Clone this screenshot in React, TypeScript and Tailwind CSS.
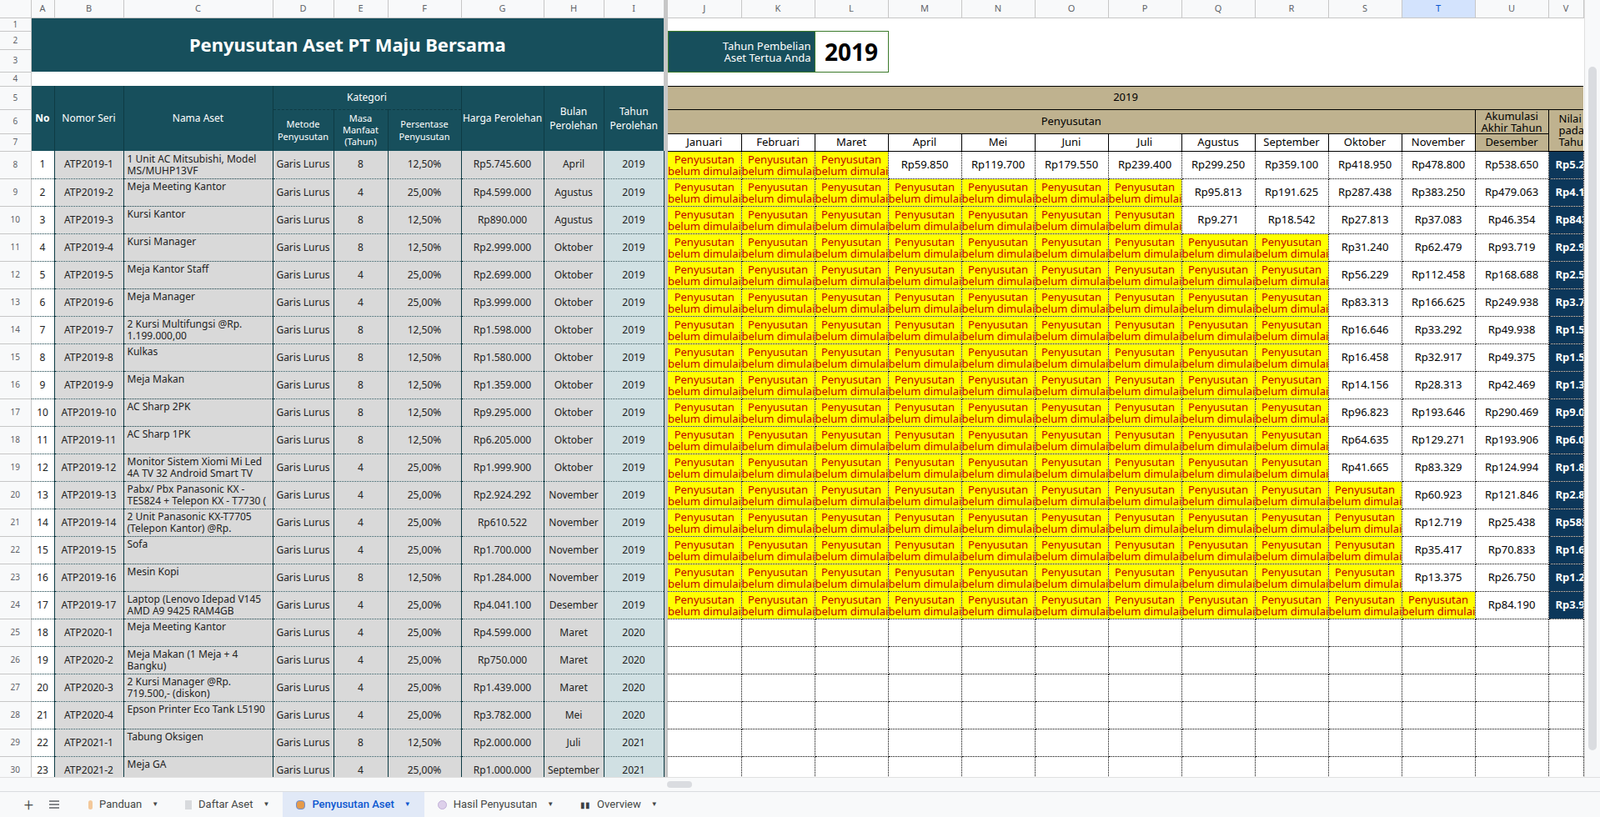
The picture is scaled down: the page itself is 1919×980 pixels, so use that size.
import React from 'react';

const months = ['Januari', 'Februari', 'Maret', 'April', 'Mei', 'Juni', 'Juli', 'Agustus', 'September', 'Oktober', 'November'];
const letters = ['A', 'B', 'C', 'D', 'E', 'F', 'G', 'H', 'I'];
const rightLetters = ['J', 'K', 'L', 'M', 'N', 'O', 'P', 'Q', 'R', 'S', 'T', 'U', 'V'];
const leftW = [28, 83, 179, 73, 65, 88, 99, 72, 72];

type Row = { seri: string; nama: string; masa: number; harga: number; bulan: string; tahun: number; start: number; dep: number[] };

const R = (seri: string, nama: string, masa: number, harga: number, bulan: string, tahun: number, start: number, dep: number[]): Row => ({ seri, nama, masa, harga, bulan, tahun, start, dep });

const rows: Row[] = [
  R('ATP2019-1', '1 Unit AC Mitsubishi, Model MS/MUHP13VF', 8, 5745600, 'April', 2019, 3, [59850, 119700, 179550, 239400, 299250, 359100, 418950, 478800, 538650]),
  R('ATP2019-2', 'Meja Meeting Kantor', 4, 4599000, 'Agustus', 2019, 7, [95813, 191625, 287438, 383250, 479063]),
  R('ATP2019-3', 'Kursi Kantor', 8, 890000, 'Agustus', 2019, 7, [9271, 18542, 27813, 37083, 46354]),
  R('ATP2019-4', 'Kursi Manager', 8, 2999000, 'Oktober', 2019, 9, [31240, 62479, 93719]),
  R('ATP2019-5', 'Meja Kantor Staff', 4, 2699000, 'Oktober', 2019, 9, [56229, 112458, 168688]),
  R('ATP2019-6', 'Meja Manager', 4, 3999000, 'Oktober', 2019, 9, [83313, 166625, 249938]),
  R('ATP2019-7', '2 Kursi Multifungsi @Rp. 1.199.000,00', 8, 1598000, 'Oktober', 2019, 9, [16646, 33292, 49938]),
  R('ATP2019-8', 'Kulkas', 8, 1580000, 'Oktober', 2019, 9, [16458, 32917, 49375]),
  R('ATP2019-9', 'Meja Makan', 8, 1359000, 'Oktober', 2019, 9, [14156, 28313, 42469]),
  R('ATP2019-10', 'AC Sharp 2PK', 8, 9295000, 'Oktober', 2019, 9, [96823, 193646, 290469]),
  R('ATP2019-11', 'AC Sharp 1PK', 8, 6205000, 'Oktober', 2019, 9, [64635, 129271, 193906]),
  R('ATP2019-12', 'Monitor Sistem Xiomi Mi Led 4A TV 32 Android Smart TV', 4, 1999900, 'Oktober', 2019, 9, [41665, 83329, 124994]),
  R('ATP2019-13', 'Pabx/ Pbx Panasonic KX - TES824 + Telepon KX - T7730 ( Telepon )', 4, 2924292, 'November', 2019, 10, [60923, 121846]),
  R('ATP2019-14', '2 Unit Panasonic KX-T7705 (Telepon Kantor) @Rp. 305.261,-', 4, 610522, 'November', 2019, 10, [12719, 25438]),
  R('ATP2019-15', 'Sofa', 4, 1700000, 'November', 2019, 10, [35417, 70833]),
  R('ATP2019-16', 'Mesin Kopi', 8, 1284000, 'November', 2019, 10, [13375, 26750]),
  R('ATP2019-17', 'Laptop (Lenovo Idepad V145 AMD A9 9425 RAM4GB HDDITB 15.6" Radeon Graphics)', 4, 4041100, 'Desember', 2019, 11, [84190]),
  R('ATP2020-1', 'Meja Meeting Kantor', 4, 4599000, 'Maret', 2020, -1, []),
  R('ATP2020-2', 'Meja Makan (1 Meja + 4 Bangku)', 4, 750000, 'Maret', 2020, -1, []),
  R('ATP2020-3', '2 Kursi Manager @Rp. 719.500,- (diskon)', 4, 1439000, 'Maret', 2020, -1, []),
  R('ATP2020-4', 'Epson Printer Eco Tank L5190', 4, 3782000, 'Mei', 2020, -1, []),
  R('ATP2021-1', 'Tabung Oksigen', 8, 2000000, 'Juli', 2021, -1, []),
  R('ATP2021-2', 'Meja GA', 4, 1000000, 'September', 2021, -1, []),
];

const rp = (n: number) => 'Rp' + n.toLocaleString('de-DE');

const sans = "[font-family:'Liberation_Sans',Arial,sans-serif]";
const serif = "[font-family:'Liberation_Serif',serif]";
const rowHdr = `w-[37px] border-r border-b border-[#c7c7c7] bg-[#f8f9fa] text-[10px] text-[#5f6368] text-center ${sans}`;
const L = 'border-r border-[#0e3b44] [border-bottom:1px_dotted_#0e3b44] text-[12px] text-center text-[#222] whitespace-nowrap overflow-hidden';
const Rc = `border-r border-b border-dotted border-black text-[13px] text-center whitespace-nowrap overflow-hidden ${serif}`;
const head = 'bg-[#174f5c] text-white text-center border-r border-[#0e3b44]';

export default function App() {
  return (
    <div className="w-[1919px] h-[980px] overflow-hidden bg-white flex flex-col [font-family:'DejaVu_Serif',serif]">
      <div className="flex h-[938px] overflow-hidden">
        <table className="table-fixed border-collapse w-[1899px] shrink-0">
          <colgroup>
            <col className="w-[37px]" />
            {leftW.map((w, i) => <col key={i} style={{ width: w }} />)}
            <col className="w-[5px]" />
            {Array.from({ length: 12 }).map((_, i) => <col key={'r' + i} className="w-[88px]" />)}
            <col className="w-[42px]" />
          </colgroup>
          <tbody>
            <tr className={`h-[21px] text-[11px] text-[#5f6368] ${sans}`}>
              <td className="bg-[#f8f9fa] border-r border-b border-[#c7c7c7]" />
              {letters.map((l) => <td key={l} className="bg-[#f8f9fa] border-r border-b border-[#c7c7c7] text-center">{l}</td>)}
              <td className="bg-[#c7c7c7]" />
              {rightLetters.map((l) => <td key={l} className={`${l === 'T' ? 'bg-[#d3e3fd] text-[#0b57d0]' : 'bg-[#f8f9fa]'} border-r border-b border-[#c7c7c7] text-center`}>{l}</td>)}
            </tr>
            <tr className="h-[16px]">
              <td className={rowHdr}>1</td>
              <td colSpan={9} rowSpan={3} className="bg-[#174f5c] text-white text-center font-bold text-[22px]">Penyusutan Aset PT Maju Bersama</td>
              <td rowSpan={4} className="bg-[#c7c7c7]" />
              <td colSpan={13} />
            </tr>
            <tr className="h-[22px]">
              <td className={rowHdr}>2</td>
              <td colSpan={2} rowSpan={2} className={`bg-[#174f5c] text-white text-right pr-1 text-[13px] leading-[14px] border border-[#3b7a2a] ${serif}`}>Tahun Pembelian<br />Aset Tertua Anda</td>
              <td rowSpan={2} className={`border border-[#3b7a2a] text-center font-bold text-[28px] ${serif}`}>2019</td>
              <td colSpan={10} />
            </tr>
            <tr className="h-[27px]">
              <td className={rowHdr}>3</td>
              <td colSpan={10} />
            </tr>
            <tr className="h-[17px]">
              <td className={rowHdr}>4</td>
              <td colSpan={9} />
              <td colSpan={13} />
            </tr>
            <tr className="h-[28px]">
              <td className={rowHdr}>5</td>
              <td rowSpan={3} className={`${head} text-[12px] font-bold`}>No</td>
              <td rowSpan={3} className={`${head} text-[12px]`}>Nomor Seri</td>
              <td rowSpan={3} className={`${head} text-[12px]`}>Nama Aset</td>
              <td colSpan={3} className={`${head} text-[12px] [border-bottom:1px_dashed_#0e3b44]`}>Kategori</td>
              <td rowSpan={3} className={`${head} text-[12px]`}>Harga Perolehan</td>
              <td rowSpan={3} className={`${head} text-[12px] leading-[17px]`}>Bulan<br />Perolehan</td>
              <td rowSpan={3} className="bg-[#174f5c] text-white text-[12px] leading-[17px] text-center">Tahun<br />Perolehan</td>
              <td rowSpan={3} className="bg-[#c7c7c7]" />
              <td colSpan={13} className={`bg-[#bfb28f] border-t border-b border-black text-center text-[13px] ${serif}`}>2019</td>
            </tr>
            <tr className="h-[27px]">
              <td className={rowHdr}>6</td>
              <td rowSpan={2} className={`${head} text-[11px] leading-[15px]`}>Metode<br />Penyusutan</td>
              <td rowSpan={2} className={`${head} text-[11px] leading-[14px]`}>Masa<br />Manfaat<br />(Tahun)</td>
              <td rowSpan={2} className={`${head} text-[11px] leading-[15px]`}>Persentase<br />Penyusutan</td>
              <td colSpan={11} className={`bg-[#bfb28f] border-b border-black text-center text-[13px] ${serif}`}>Penyusutan</td>
              <td className={`bg-[#bfb28f] border-l border-b border-black text-center text-[13px] leading-[14px] ${serif}`}>Akumulasi<br />Akhir Tahun</td>
              <td rowSpan={2} className={`bg-[#bfb28f] text-[13px] leading-[14px] border-l border-b border-black whitespace-nowrap overflow-hidden pl-3 ${serif}`}>Nilai Buku<br />pada Akhir<br />Tahun</td>
            </tr>
            <tr className={`h-[21px] text-[13px] ${serif}`}>
              <td className={rowHdr}>7</td>
              {months.map((m) => <td key={m} className="border-r border-b border-black text-center bg-white">{m}</td>)}
              <td className="bg-[#bfb28f] border-r border-b border-black text-center">Desember</td>
            </tr>
            {rows.map((r, i) => {
              const pct = r.masa === 8 ? '12,50%' : '25,00%';
              const u = r.dep.length ? r.dep[r.dep.length - 1] : 0;
              return (
                <tr key={r.seri} className="h-[33px]">
                  <td className={rowHdr}>{i + 8}</td>
                  <td className={`${L} bg-white`}>{i + 1}</td>
                  <td className={`${L} bg-[#d9d9d9]`}>{r.seri}</td>
                  <td className="border-r border-[#0e3b44] [border-bottom:1px_dotted_#0e3b44] bg-[#d9d9d9] text-[12px] text-[#222]">
                    <div className="h-[31px] overflow-hidden px-1 pt-[2px] leading-[14px]">{r.nama}</div>
                  </td>
                  <td className={`${L} bg-[#d9d9d9]`}>Garis Lurus</td>
                  <td className={`${L} bg-[#d9d9d9]`}>{r.masa}</td>
                  <td className={`${L} bg-[#d9d9d9]`}>{pct}</td>
                  <td className={`${L} bg-[#d9d9d9]`}>{rp(r.harga)}</td>
                  <td className={`${L} bg-[#d9d9d9]`}>{r.bulan}</td>
                  <td className={`${L} bg-[#d0e0e3]`}>{r.tahun}</td>
                  <td className="bg-[#c7c7c7]" />
                  {months.map((m, j) => {
                    if (r.start < 0) return <td key={m} className={Rc} />;
                    if (j < r.start)
                      return (
                        <td key={m} className={`${Rc} bg-[#ffff00] text-[#c00000] leading-[14px]`}>
                          Penyusutan<br />belum dimulai
                        </td>
                      );
                    return <td key={m} className={Rc}>{rp(r.dep[j - r.start])}</td>;
                  })}
                  <td className={Rc}>{r.start < 0 ? '' : rp(u)}</td>
                  <td className={`${Rc} ${r.start < 0 ? '' : 'bg-[#0c375a] text-white font-bold'} text-left pl-2`}>
                    {r.start < 0 ? '' : rp(r.harga - u)}
                  </td>
                </tr>
              );
            })}
          </tbody>
        </table>
        <div className="w-[20px] bg-[#f8f9fa] border-l border-[#e0e0e0] pt-[80px] flex justify-center">
          <div className="w-[10px] h-[820px] rounded-full bg-[#dadce0]" />
        </div>
      </div>
      <div className="h-[17px] bg-[#f8f9fa] border-t border-[#e0e0e0] flex items-center pl-[800px]">
        <div className="w-[30px] h-[8px] rounded-full bg-[#dadce0]" />
      </div>
      <div className="flex-1 bg-[#f8f9fa] border-t border-[#dadce0] flex items-stretch [font-family:Roboto,sans-serif] text-[13px] text-[#444746]">
        <div className="w-[40px] flex items-center justify-end text-[20px] font-light">+</div>
        <div className="w-[50px] flex items-center justify-center">
          <svg width="14" height="12" viewBox="0 0 14 12"><path d="M1 2h12M1 6h12M1 10h12" stroke="#5f6368" strokeWidth="1.5" /></svg>
        </div>
        <Tab icon={<span className="w-[5px] h-[11px] rounded-sm bg-[#f3c89a]" />} label="Panduan" />
        <Tab icon={<span className="w-[8px] h-[11px] bg-[#d8dadd]" />} label="Daftar Aset" />
        <Tab icon={<span className="w-[11px] h-[11px] rounded-sm bg-[#e59a4a] border border-[#6b8fd8]" />} label="Penyusutan Aset" active />
        <Tab icon={<span className="w-[11px] h-[11px] rounded-full bg-[#ddd0ea] border border-[#c2b0d8]" />} label="Hasil Penyusutan" />
        <Tab icon={<span className="text-[10px] text-[#3c4043]">▮▮</span>} label="Overview" />
      </div>
    </div>
  );
}

function Tab({ icon, label, active }: { icon: React.ReactNode; label: string; active?: boolean }) {
  return (
    <div className={`flex items-center gap-2 px-4 ${active ? 'bg-[#e1e9f7] text-[#0b57d0] font-medium' : ''}`}>
      {icon}
      <span>{label}</span>
      <span className="text-[8px] ml-1">▼</span>
    </div>
  );
}
